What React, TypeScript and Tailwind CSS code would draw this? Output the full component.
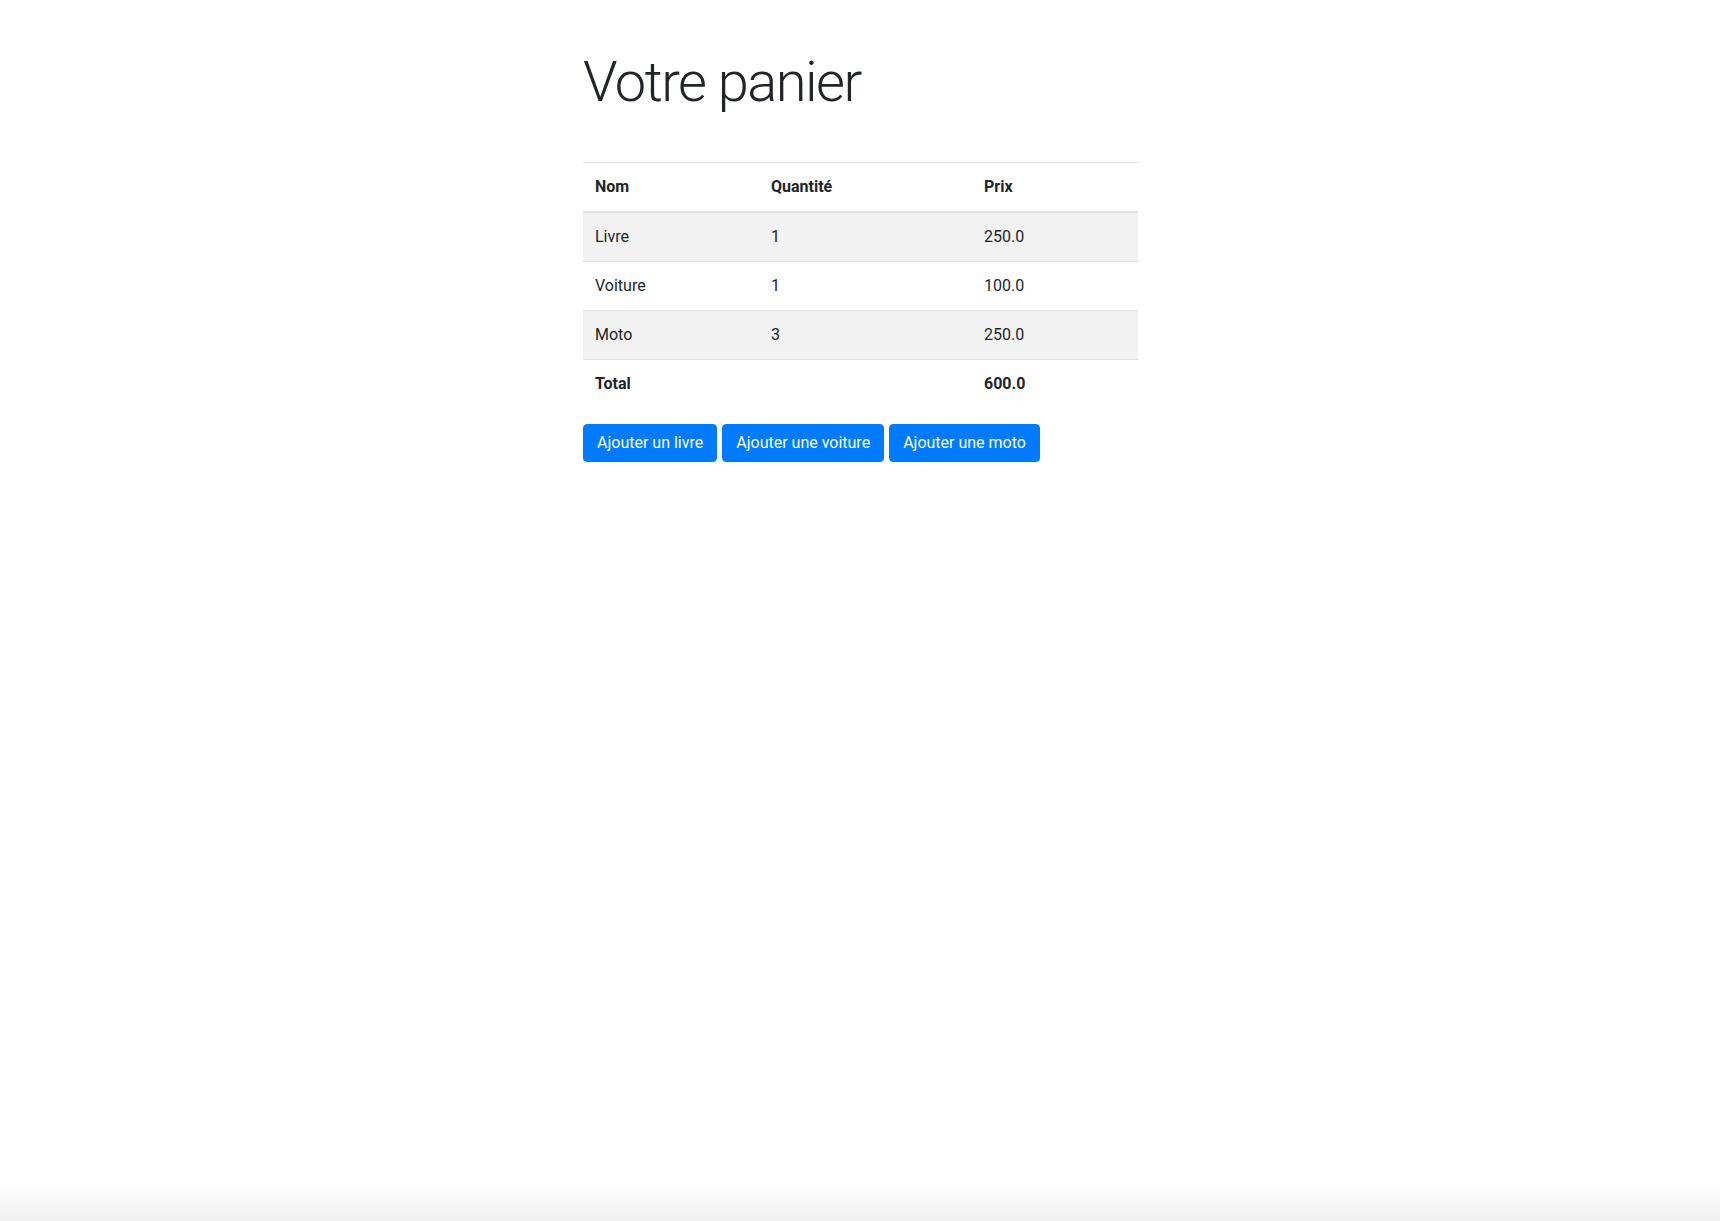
const items = [
  { name: "Livre", qty: 1, price: "250.0" },
  { name: "Voiture", qty: 1, price: "100.0" },
  { name: "Moto", qty: 3, price: "250.0" },
];

const buttons = ["Ajouter un livre", "Ajouter une voiture", "Ajouter une moto"];

export default function App() {
  return (
    <div
      className="min-h-screen flex flex-col bg-white text-[#212529] text-base"
      style={{ fontFamily: "Roboto, 'Noto Sans', sans-serif" }}
    >
      <div className="w-[555px] ml-[583px] pt-[49px]">
        <h1 className="text-[56px] leading-[1.2] font-light tracking-[-1.5px] mb-[46px]">Votre panier</h1>

        <table className="w-full border-collapse mb-4">
          <thead>
            <tr className="border-t border-[#dee2e6] border-b-2 border-b-[#dee2e6]">
              <th className="w-[176px] px-3 py-3 text-left font-bold leading-6">Nom</th>
              <th className="w-[213px] px-3 py-3 text-left font-bold leading-6">Quantité</th>
              <th className="px-3 py-3 text-left font-bold leading-6">Prix</th>
            </tr>
          </thead>
          <tbody>
            {items.map((item, i) => (
              <tr key={item.name} className={"border-t border-[#dee2e6] " + (i % 2 === 0 ? "bg-[#f2f2f2]" : "")}>
                <td className="px-3 py-3 leading-6">{item.name}</td>
                <td className="px-3 py-3 leading-6">{item.qty}</td>
                <td className="px-3 py-3 leading-6">{item.price}</td>
              </tr>
            ))}
            <tr className="border-t border-[#dee2e6]">
              <td className="px-3 py-3 leading-6 font-bold">Total</td>
              <td className="px-3 py-3 leading-6"></td>
              <td className="px-3 py-3 leading-6 font-bold">600.0</td>
            </tr>
          </tbody>
        </table>

        <div className="flex gap-[5px]">
          {buttons.map((label) => (
            <button
              key={label}
              className="h-[38px] px-[13px] rounded-[4px] bg-[#007bff] text-white text-base leading-6 border border-[#007bff]"
            >
              {label}
            </button>
          ))}
        </div>
      </div>

      <div className="flex-1" />
      <div className="h-[40px] bg-gradient-to-b from-white to-[#efefef]" />
    </div>
  );
}
